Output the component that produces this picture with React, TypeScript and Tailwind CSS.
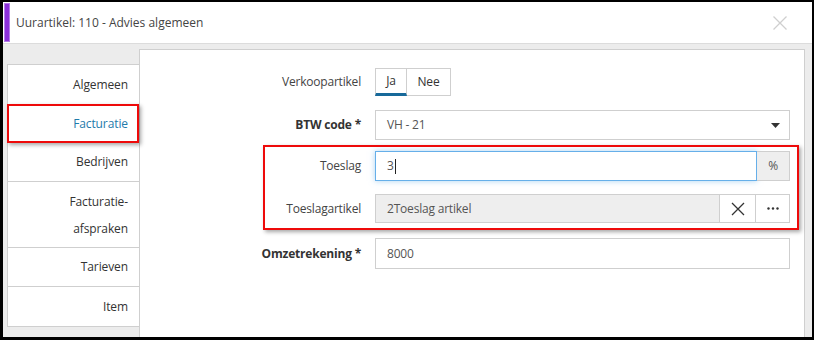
import React from "react";

const NavItem = ({
  children,
  active,
  border,
  boxed,
  tall,
}: {
  children: React.ReactNode;
  active?: boolean;
  border?: boolean;
  boxed?: boolean;
  tall?: boolean;
}) => (
  <div
    className={`relative flex flex-col items-end justify-center pr-[11px] text-[12px] tracking-[-0.1px] ${
      tall ? "h-[66px] leading-[27px]" : "h-[39px]"
    } ${border ? "border-b border-[#cfcfcf]" : ""} ${active ? "text-[#1f7bab]" : "text-[#333]"}`}
  >
    {children}
    {boxed && (
      <div className="absolute -left-px top-0 w-[132px] h-[39px] border-2 border-[#ee0a0a] shadow-[2px_2px_4px_rgba(0,0,0,0.35)]" />
    )}
  </div>
);

export default function App() {
  return (
    <div className="w-[814px] h-[340px] bg-black pt-[2px] pl-[3px] pr-[2px] pb-[3px] font-['Open_Sans',sans-serif] overflow-hidden">
      <div className="w-full h-full bg-[#ececec] flex flex-col">
        {/* header */}
        <div className="h-[42px] shrink-0 bg-white border-b border-[#dcdcdc] flex items-center relative">
          <div className="ml-[1px] w-[6px] h-[39px] bg-[#8b2fd9] border border-[#b47ae8]" />
          <div className="ml-[6px] text-[12px] text-[#444]">Uurartikel: 110 - Advies algemeen</div>
          <div className="ml-auto mr-[24px]">
            <svg width="16" height="16" viewBox="0 0 16 16">
              <path d="M1.5 1.5 L14.5 14.5 M14.5 1.5 L1.5 14.5" stroke="#cfcfcf" strokeWidth="1.3" fill="none" />
            </svg>
          </div>
        </div>
        {/* body */}
        <div className="flex flex-1 min-h-0">
          <div className="w-[136px] shrink-0 pl-[4px] pt-[20px]">
            <div className="bg-white border-l border-t border-b border-[#cfcfcf]">
              <NavItem>Algemeen</NavItem>
              <NavItem active boxed>Facturatie</NavItem>
              <NavItem border>Bedrijven</NavItem>
              <NavItem border tall>
                <span>Facturatie-</span>
                <span>afspraken</span>
              </NavItem>
              <NavItem border>Tarieven</NavItem>
              <NavItem>Item</NavItem>
            </div>
          </div>
          <div className="flex-1 mt-[5px] mr-[7px] bg-white border-l border-t border-r border-[#cfcfcf] text-[12px] tracking-[-0.2px]">
            <div className="pt-[18px] flex flex-col">
              {/* Verkoopartikel */}
              <div className="flex items-center">
                <div className="w-[221px] text-right text-[#444]">Verkoopartikel</div>
                <div className="ml-[14px] flex h-[28px]">
                  <div className="w-[32px] border border-[#cfcfcf] border-b-[3px] border-b-[#17699a] flex items-center justify-center text-[#333]">
                    Ja
                  </div>
                  <div className="w-[44px] border border-l-0 border-[#cfcfcf] flex items-center justify-center text-[#333]">
                    Nee
                  </div>
                </div>
              </div>
              {/* BTW */}
              <div className="flex items-center mt-[14px]">
                <div className="w-[221px] text-right text-[#333] font-bold">BTW code *</div>
                <div className="ml-[14px] w-[415px] h-[30px] border border-[#cfcfcf] flex items-center pl-[11px] pr-[9px] text-[#555]">
                  <span>VH - 21</span>
                  <svg className="ml-auto" width="9" height="5" viewBox="0 0 9 5">
                    <path d="M0 0 L9 0 L4.5 5 Z" fill="#333" />
                  </svg>
                </div>
              </div>
              {/* red box group */}
              <div className="relative mt-[11px]">
                <div className="absolute left-[123px] -top-[6px] w-[536px] h-[85px] border-2 border-[#ee0a0a] shadow-[2px_2px_4px_rgba(0,0,0,0.35)] pointer-events-none" />
                <div className="flex items-center">
                  <div className="w-[221px] text-right text-[#444]">Toeslag</div>
                  <div className="ml-[14px] flex w-[415px] h-[30px]">
                    <div className="flex-1 border border-[#66afe9] shadow-[0_0_6px_rgba(102,175,233,0.55)] flex items-center pl-[11px] text-[#555]">
                      <span>3</span>
                      <span className="w-px h-[15px] bg-[#222] ml-[1px]" />
                    </div>
                    <div className="w-[33px] bg-[#eeeeee] border border-l-0 border-[#cfcfcf] flex items-center justify-center text-[#555]">
                      %
                    </div>
                  </div>
                </div>
                <div className="flex items-center mt-[13px]">
                  <div className="w-[221px] text-right text-[#444]">Toeslagartikel</div>
                  <div className="ml-[14px] flex w-[415px] h-[29px]">
                    <div className="flex-1 bg-[#eeeeee] border border-[#cfcfcf] flex items-center pl-[11px] text-[#555]">
                      2Toeslag artikel
                    </div>
                    <div className="w-[35px] border-t border-b border-[#cfcfcf] flex items-center justify-center">
                      <svg width="14" height="14" viewBox="0 0 14 14">
                        <path d="M1 1 L13 13 M13 1 L1 13" stroke="#333" strokeWidth="1.3" fill="none" />
                      </svg>
                    </div>
                    <div className="w-[35px] border border-[#cfcfcf] flex items-center justify-center">
                      <svg width="12" height="3" viewBox="0 0 12 3">
                        <circle cx="1.5" cy="1.5" r="1.2" fill="#333" />
                        <circle cx="6" cy="1.5" r="1.2" fill="#333" />
                        <circle cx="10.5" cy="1.5" r="1.2" fill="#333" />
                      </svg>
                    </div>
                  </div>
                </div>
              </div>
              {/* Omzetrekening */}
              <div className="flex items-center mt-[15px]">
                <div className="w-[221px] text-right text-[#333] font-bold">Omzetrekening *</div>
                <div className="ml-[14px] w-[415px] h-[31px] border border-[#cfcfcf] flex items-center pl-[11px] text-[#555]">
                  8000
                </div>
              </div>
            </div>
          </div>
        </div>
      </div>
    </div>
  );
}
